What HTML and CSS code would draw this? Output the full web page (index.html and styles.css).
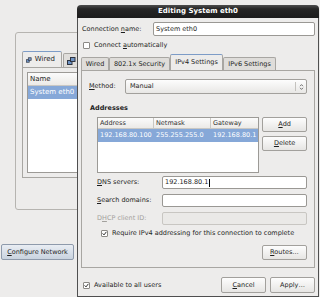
FILE: index.html
```html
<!DOCTYPE html>
<html>
<head>
<meta charset="utf-8">
<link rel="stylesheet" href="styles.css">
</head>
<body>
<div class="bgwin">
  <div class="frame">
    <div class="btabs">
      <div class="btab active">
        <svg class="neticon" width="9" height="8" viewBox="0 0 9 8"><rect x="0.5" y="3.5" width="4.5" height="4" fill="#6f93c4" stroke="#2e3440"/><rect x="3.5" y="0.5" width="4.5" height="4" fill="#6f93c4" stroke="#2e3440"/></svg>
        <span>Wired</span>
      </div>
      <div class="btab">
        <svg class="neticon" width="9" height="8" viewBox="0 0 9 8"><rect x="0.5" y="3.5" width="4.5" height="4" fill="#6f93c4" stroke="#2e3440"/><rect x="3.5" y="0.5" width="4.5" height="4" fill="#6f93c4" stroke="#2e3440"/></svg>
        <span>W</span>
      </div>
    </div>
    <div class="bpanel">
      <div class="list">
        <div class="lhead">Name</div>
        <div class="lrow sel">System eth0</div>
      </div>
    </div>
  </div>
  <div class="btn cfg"><span><u>C</u>onfigure Network</span></div>
</div>

<div class="dialog">
  <div class="titlebar">Editing System eth0</div>
  <div class="dbody">
    <div class="namerow">
      <div class="namelabel">Connection <u>n</u>ame:</div>
      <div class="entry">System eth0</div>
    </div>
    <div class="checkrow">
      <span class="cb"></span>
      <span>Connect <u>a</u>utomatically</span>
    </div>
    <div class="tabs">
      <div class="tab t1">Wired</div>
      <div class="tab t2">802.1x Security</div>
      <div class="tab t3 active">IPv4 Settings</div>
      <div class="tab t4">IPv6 Settings</div>
    </div>
    <div class="panel">
      <div class="methodrow">
        <div class="mlabel"><u>M</u>ethod:</div>
        <div class="combo">
          <span class="ctext">Manual</span>
          <span class="carrow"><svg width="5" height="8" viewBox="0 0 5 8"><path d="M1 3.2 L2.5 1.6 L4 3.2 M1 4.8 L2.5 6.4 L4 4.8" fill="none" stroke="#555" stroke-width="0.8"/></svg></span>
        </div>
      </div>
      <div class="section">Addresses</div>
      <div class="addrarea">
        <div class="table">
          <div class="thead">
            <div class="th">Address</div>
            <div class="th">Netmask</div>
            <div class="th last">Gateway</div>
          </div>
          <div class="trow sel">
            <div class="td">192.168.80.100</div>
            <div class="td">255.255.255.0</div>
            <div class="td">192.168.80.1</div>
          </div>
        </div>
        <div class="sidebtns">
          <div class="btn"><span><u>A</u>dd</span></div>
          <div class="btn"><span><u>D</u>elete</span></div>
        </div>
      </div>
      <div class="form">
        <div class="flabel"><u>D</u>NS servers:</div>
        <div class="entry">192.168.80.1<span class="caret"></span></div>
        <div class="flabel"><u>S</u>earch domains:</div>
        <div class="entry"></div>
        <div class="flabel dis">D<u>H</u>CP client ID:</div>
        <div class="entry disabled"></div>
      </div>
      <div class="checkrow req">
        <span class="cb"><svg width="5" height="5" viewBox="0 0 5 5"><path d="M0.6 2.4 L2 3.9 L4.4 0.8" fill="none" stroke="#333" stroke-width="1"/></svg></span>
        <span>Require IPv4 addressing for this connection to complete</span>
      </div>
      <div class="btn routes"><span><u>R</u>outes…</span></div>
    </div>
    <div class="footer">
      <span class="cb"><svg width="5" height="5" viewBox="0 0 5 5"><path d="M0.6 2.4 L2 3.9 L4.4 0.8" fill="none" stroke="#333" stroke-width="1"/></svg></span>
      <span class="avail">Available to all users</span>
      <div class="btn fbtn cancel"><span><u>C</u>ancel</span></div>
      <div class="btn fbtn"><span>Apply…</span></div>
    </div>
  </div>
</div>
</body>
</html>
```

FILE: styles.css
```css
* { box-sizing: border-box; }

body {
  margin: 0;
  width: 320px;
  height: 297px;
  overflow: hidden;
  position: relative;
  background: #edeceb;
  font-family: "DejaVu Sans", sans-serif;
  font-size: 6.5px;
  line-height: 1;
  color: #1e1e1e;
  white-space: nowrap;
}

u { text-decoration: underline; text-underline-offset: 1px; }

/* ---------- background window ---------- */
.bgwin {
  display: flex;
  flex-direction: column;
  width: 77px;
  overflow: hidden;
}

.frame {
  margin: 32px 0 0 15px;
  width: 150px;
  flex: 0 0 178px;
  height: 178px;
  border: 1px solid #b6b4b0;
  border-radius: 3px;
  padding: 18px 0 0 6px;
}

.btabs {
  display: flex;
  align-items: flex-end;
  height: 16px;
}

.btab {
  display: flex;
  align-items: center;
  gap: 3px;
  height: 14px;
  padding: 0 6px 0 3px;
  border: 1px solid #a8a6a2;
  border-bottom: none;
  border-radius: 2px 2px 0 0;
  background: #e0dedb;
  margin-left: 1px;
  font-size: 7px;
}

.btab.active {
  width: 40px;
  height: 16px;
  margin-left: 0;
  background: #edeceb;
  border-top: 1px solid #7d9cc7;
}

.bpanel {
  width: 150px;
  height: 111px;
  border: 1px solid #a8a6a2;
  padding: 4px;
}

.list {
  height: 101px;
  background: #fff;
  border: 1px solid #9c9a96;
}

.lhead {
  height: 13px;
  line-height: 13px;
  padding-left: 2px;
  font-size: 7px;
  background: linear-gradient(#fbfbfb, #eceae7);
  border-bottom: 1px solid #c9c7c3;
}

.lrow {
  height: 13px;
  line-height: 13px;
  padding-left: 2px;
  font-size: 7px;
}

.sel {
  background: #86a8d8;
  color: #fff;
}

/* ---------- buttons ---------- */
.btn {
  display: flex;
  align-items: center;
  justify-content: center;
  height: 15px;
  border: 1px solid #a2a09c;
  border-radius: 2px;
  background: linear-gradient(#fdfdfd, #e6e5e3);
}

.cfg {
  margin: 34px 0 0 1px;
  width: 73px;
  flex: 0 0 16px;
  height: 16px;
  background: linear-gradient(#e9edf3, #c9d3df);
  border-color: #8e9aab;
}

/* ---------- dialog ---------- */
.dialog {
  position: absolute;
  left: 77px;
  top: 5px;
  width: 242px;
  height: 292px;
  display: flex;
  flex-direction: column;
}

.titlebar {
  height: 13px;
  line-height: 13px;
  text-align: center;
  font-weight: bold;
  font-size: 7px;
  color: #fff;
  border-radius: 4px 4px 0 0;
  background: linear-gradient(#4d4d4d, #262626 30%, #1c1c1c);
}

.dbody {
  flex: 1;
  border: 1px solid #4f4f4f;
  border-top: none;
  padding: 0 3px;
  background: #edeceb;
  display: flex;
  flex-direction: column;
}

.namerow {
  display: flex;
  align-items: center;
  margin-top: 4px;
  height: 14px;
}

.namelabel {
  flex: 0 0 72px;
  padding-left: 1px;
}

.entry {
  display: flex;
  align-items: center;
  height: 100%;
  flex: 1;
  background: #fff;
  border: 1px solid #9a9894;
  border-radius: 2px;
  padding-left: 2px;
}

.entry.disabled {
  background: #eae9e7;
  border-color: #c8c6c2;
}

.caret {
  display: inline-block;
  width: 1px;
  height: 8px;
  background: #000;
  margin-left: 1px;
}

.checkrow {
  display: flex;
  align-items: center;
  gap: 4px;
  height: 13px;
  margin-top: 3px;
  padding-left: 2px;
}

.cb {
  display: flex;
  align-items: center;
  justify-content: center;
  width: 7px;
  height: 7px;
  background: #fff;
  border: 1px solid #8c8a86;
  border-radius: 1px;
  flex: 0 0 7px;
}

/* tabs */
.tabs {
  display: flex;
  align-items: flex-end;
  height: 16px;
  margin-top: 2px;
}

.tab {
  display: flex;
  align-items: center;
  justify-content: center;
  height: 13px;
  border: 1px solid #a8a6a2;
  border-bottom: none;
  border-radius: 2px 2px 0 0;
  background: #dfddda;
}

.tab.active {
  height: 16px;
  background: #edeceb;
  border-top-color: #7d9cc7;
}

.t1 { width: 28px; }
.t2 { width: 61px; }
.t3 { width: 53px; }
.t4 { width: 53px; }

.panel {
  height: 198px;
  border: 1px solid #a8a6a2;
  padding: 8px 7px 0 7px;
  display: flex;
  flex-direction: column;
}

.methodrow {
  display: flex;
  align-items: center;
  height: 15px;
}

.mlabel {
  flex: 0 0 36px;
}

.combo {
  flex: 1;
  height: 100%;
  display: flex;
  align-items: center;
  border: 1px solid #a2a09c;
  border-radius: 2px;
  background: linear-gradient(#fdfdfd, #e8e7e5);
}

.ctext {
  flex: 1;
  padding-left: 4px;
}

.carrow {
  display: flex;
  align-items: center;
  justify-content: center;
  width: 11px;
  height: 9px;
  border-left: 1px solid #c4c2be;
}

.section {
  margin-top: 10px;
  height: 9px;
  line-height: 9px;
  padding-left: 1px;
  font-weight: bold;
}

.addrarea {
  display: flex;
  gap: 3px;
  margin: 4px 0 0 8px;
}

.table {
  width: 163px;
  height: 56px;
  background: #fff;
  border: 1px solid #9c9a96;
}

.thead, .trow {
  display: grid;
  grid-template-columns: 56px 57px 1fr;
}

.thead {
  height: 11px;
  background: linear-gradient(#fbfbfb, #eceae7);
  border-bottom: 1px solid #c9c7c3;
}

.th {
  line-height: 10px;
  padding-left: 2px;
  border-right: 1px solid #c9c7c3;
  color: #333;
}

.th.last { border-right: none; }

.trow {
  height: 13px;
  line-height: 13px;
}

.td {
  padding-left: 2px;
}

.sidebtns {
  display: flex;
  flex-direction: column;
  gap: 4px;
  width: 45px;
}

.form {
  display: grid;
  grid-template-columns: 65px 1fr;
  grid-auto-rows: 13px;
  row-gap: 5px;
  align-items: center;
  margin: 3px 0 0 8px;
}

.flabel.dis { color: #a3a19d; }

.checkrow.req {
  margin-top: 2px;
  padding-left: 12px;
}

.routes {
  align-self: flex-end;
  width: 45px;
  margin-top: 5px;
}

.footer {
  display: flex;
  align-items: center;
  height: 16px;
  margin-top: 9px;
  padding-left: 2px;
}

.avail {
  margin-left: 4px;
}

.fbtn {
  width: 45px;
  height: 16px;
  margin-left: 4px;
}

.fbtn.cancel { margin-left: auto; }
```
